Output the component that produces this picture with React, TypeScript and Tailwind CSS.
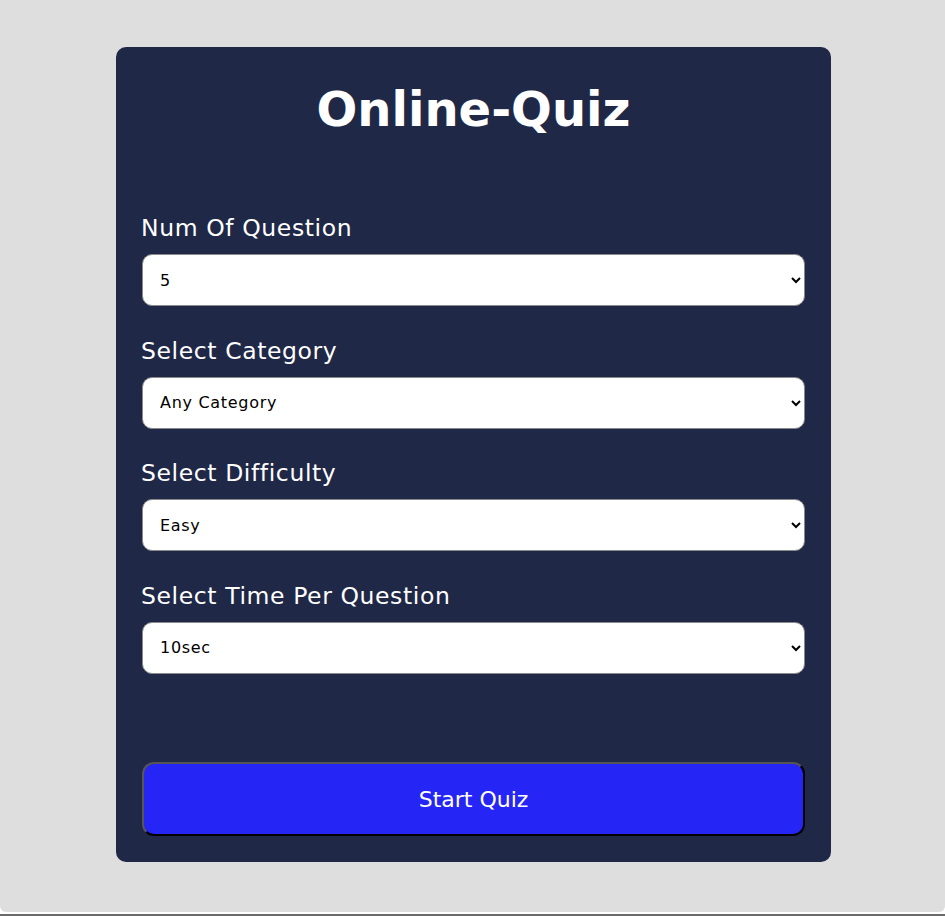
import { useState } from "react";

const FIELDS = [
  { label: "Num Of Question", options: ["5", "10", "15", "20"] },
  {
    label: "Select Category",
    options: ["Any Category", "General Knowledge", "Science & Nature", "History"],
  },
  { label: "Select Difficulty", options: ["Easy", "Medium", "Hard"] },
  { label: "Select Time Per Question", options: ["10sec", "20sec", "30sec"] },
];

export default function App() {
  const [values, setValues] = useState(FIELDS.map((f) => f.options[0]));

  return (
    <div className="h-[916px] bg-white flex flex-col font-['DejaVu_Sans','Noto_Sans',sans-serif]">
      <div className="h-[912px] bg-[#dedede] rounded-b-[6px] flex justify-center">
        <div className="mt-[47px] ml-[2px] w-[715px] h-[815px] bg-[#1f2846] rounded-[10px] px-[26px] pt-[26px] flex flex-col">
          <h1 className="text-white text-[48px] leading-[72px] font-bold text-center">
            Online-Quiz
          </h1>

          <div className="mt-[65px] flex flex-col gap-[26.5px]">
            {FIELDS.map((f, i) => (
              <div key={f.label} className="flex flex-col gap-[8px]">
                <label className="text-white text-[23.5px] leading-[36px] tracking-[0.6px] -ml-[1px]">
                  {f.label}
                </label>
                <select
                  value={values[i]}
                  onChange={(e) =>
                    setValues((v) => v.map((x, j) => (j === i ? e.target.value : x)))
                  }
                  className="h-[52px] w-full bg-white text-black text-[16px] tracking-[0.7px] rounded-[10px] border border-[#8a8a8a] pl-[13px] pr-[8px] outline-none"
                >
                  {f.options.map((o) => (
                    <option key={o}>{o}</option>
                  ))}
                </select>
              </div>
            ))}
          </div>

          <button className="mt-[88.5px] h-[74px] w-full bg-[#2525f5] text-white text-[22px] rounded-[12px] border-2 border-t-[#555] border-l-[#555] border-b-black border-r-black">
            Start Quiz
          </button>
        </div>
      </div>
      <div className="h-[2px]" />
      <div className="h-[2px] bg-[#6b6b6b]" />
    </div>
  );
}
